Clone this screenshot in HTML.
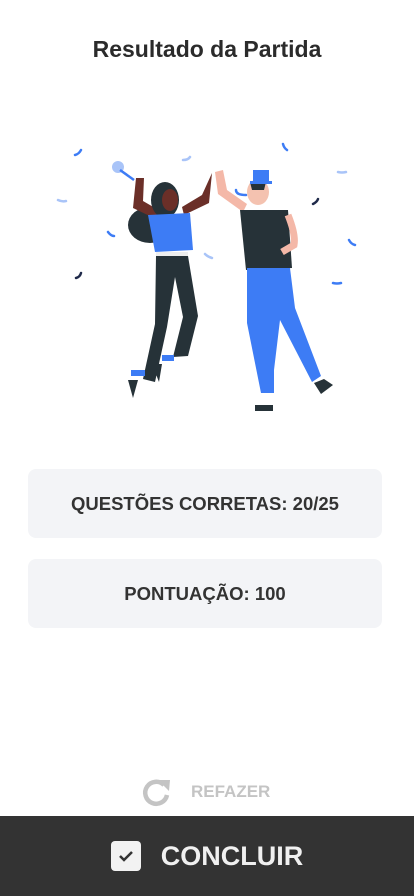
<!DOCTYPE html>
<html><head><meta charset="utf-8"><style>
body{margin:0;width:414px;height:896px;background:#fff;font-family:"Liberation Sans",sans-serif;position:relative;overflow:hidden}
h1{position:absolute;top:36px;left:0;width:414px;text-align:center;font-size:23px;font-weight:bold;color:#2b2b2b;margin:0}
.card{position:absolute;left:28px;width:354px;height:69px;background:#f3f4f7;border-radius:8px;display:flex;align-items:center;justify-content:center;font-weight:bold;font-size:18.5px;color:#333}
.redo{position:absolute;top:776px;left:140px;display:flex;align-items:center;color:#c4c4c4;font-weight:bold;font-size:17px}
.bar{position:absolute;top:816px;left:0;width:414px;height:80px;background:#333;display:flex;align-items:center;justify-content:center;color:#f0f0f0;font-weight:bold;font-size:27px}
.chk{width:30px;height:30px;background:#f2f2f2;border-radius:4px;margin-right:20px;display:flex;align-items:center;justify-content:center}
</style></head><body>
<h1>Resultado da Partida</h1>
<svg style="position:absolute;left:0;top:0" width="414" height="440">
<g fill="none" stroke-linecap="round" stroke-width="2.5">
<path d="M75 155q4-1 6-5" stroke="#3d7cf5"/><path d="M183 160q5 0 7-3" stroke="#a9c4f8"/>
<path d="M58 200q4 2 8 1" stroke="#a9c4f8"/><path d="M108 232q3 4 6 4" stroke="#3d7cf5"/>
<path d="M76 278q4-1 5-5" stroke="#1f2a4a"/><path d="M205 254q3 3 7 4" stroke="#a9c4f8"/>
<path d="M283 144q1 4 4 6" stroke="#3d7cf5"/><path d="M338 172q4 1 8 0" stroke="#a9c4f8"/>
<path d="M313 204q4-2 5-5" stroke="#1f2a4a"/><path d="M349 240q2 4 6 5" stroke="#3d7cf5"/>
<path d="M333 283q4 1 8 0" stroke="#3d7cf5"/><path d="M236 190q0 5 10 5" stroke="#3d7cf5"/>
</g>
<circle cx="118" cy="167" r="6" fill="#a9c4f8"/><path d="M120 170l14 10" stroke="#3d7cf5" stroke-width="2.5"/>
<ellipse cx="150" cy="225" rx="22" ry="18" fill="#263238"/>
<path d="M136 178l-3 30 25 12 4-8-19-11 1-23z" fill="#6b2f28"/>
<path d="M212 173l-3 30-25 12-2-8 20-12z" fill="#6b2f28"/>
<ellipse cx="165" cy="200" rx="14" ry="18" fill="#263238"/>
<ellipse cx="170" cy="200" rx="8" ry="11" fill="#6b2f28"/>
<path d="M148 215l42-2 3 37-38 2z" fill="#3d7cf5"/>
<rect x="156" y="252" width="32" height="4" fill="#eee"/>
<path d="M156 256h32l10 60-10 40-15 1 10-40-8-40-8 50-12 55-12-3 12-55z" fill="#263238"/>
<rect x="131" y="370" width="14" height="6" fill="#3d7cf5"/><rect x="162" y="355" width="12" height="6" fill="#3d7cf5"/>
<path d="M128 380l10 0-5 18z" fill="#263238"/><path d="M152 364l10 0-3 18z" fill="#263238"/>
<path d="M215 172l3 22 25 18 4-8-20-14-4-20z" fill="#f4b8a8"/>
<ellipse cx="258" cy="192" rx="11" ry="13" fill="#f4c2b0"/>
<path d="M250 182h16l-2 8h-12z" fill="#263238"/>
<rect x="253" y="170" width="16" height="13" fill="#3d7cf5"/><rect x="250" y="181" width="22" height="3" fill="#3d7cf5"/>
<path d="M240 210l48 0 4 58-46 2z" fill="#263238"/>
<path d="M288 215q8 20 6 30l-12 7" stroke="#f4b8a8" stroke-width="7" fill="none"/>
<path d="M247 268h43l5 40 26 68-9 6-32-62-6 50v23h-13l-14-70z" fill="#3d7cf5"/>
<path d="M255 405h18v6h-18z" fill="#263238"/><path d="M314 383l10-4 9 6-12 9z" fill="#263238"/>
</svg>
<div class="card" style="top:469px">QUESTÕES CORRETAS: 20/25</div>
<div class="card" style="top:559px">PONTUAÇÃO: 100</div>
<div class="redo"><svg width="32" height="32" viewBox="0 0 32 32" style="margin-right:19px"><path d="M24 9A11 11 0 1 0 27 19" fill="none" stroke="#c4c4c4" stroke-width="4.5"/><path d="M18 4l12 0-1 11z" fill="#c4c4c4"/></svg>REFAZER</div>
<div class="bar"><div class="chk"><svg width="16" height="12" viewBox="0 0 16 12"><path d="M2 6l4 4 8-8" fill="none" stroke="#333" stroke-width="2.5"/></svg></div>CONCLUIR</div>
</body></html>
